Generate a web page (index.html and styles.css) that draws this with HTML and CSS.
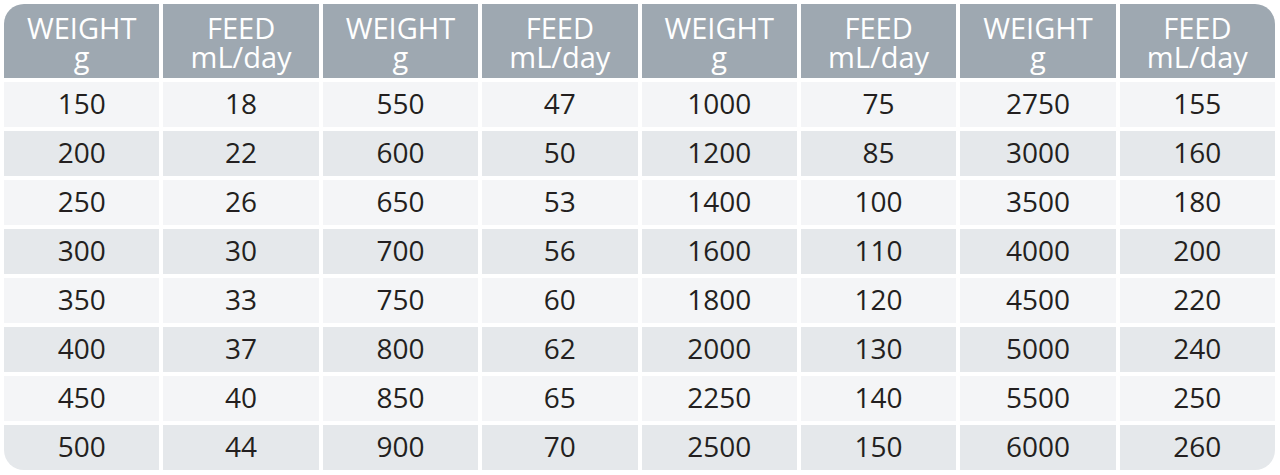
FILE: index.html
```html
<!DOCTYPE html>
<html lang="en">
<head>
<meta charset="utf-8">
<title>Feeding table</title>
<link rel="stylesheet" href="styles.css">
</head>
<body>
<div class="table">
  <div class="th"><span>WEIGHT</span><span>g</span></div><div class="th"><span>FEED</span><span>mL/day</span></div>
  <div class="th"><span>WEIGHT</span><span>g</span></div><div class="th"><span>FEED</span><span>mL/day</span></div>
  <div class="th"><span>WEIGHT</span><span>g</span></div><div class="th"><span>FEED</span><span>mL/day</span></div>
  <div class="th"><span>WEIGHT</span><span>g</span></div><div class="th"><span>FEED</span><span>mL/day</span></div>

  <div class="td odd">150</div><div class="td odd">18</div><div class="td odd">550</div><div class="td odd">47</div><div class="td odd">1000</div><div class="td odd">75</div><div class="td odd">2750</div><div class="td odd">155</div>
  <div class="td even">200</div><div class="td even">22</div><div class="td even">600</div><div class="td even">50</div><div class="td even">1200</div><div class="td even">85</div><div class="td even">3000</div><div class="td even">160</div>
  <div class="td odd">250</div><div class="td odd">26</div><div class="td odd">650</div><div class="td odd">53</div><div class="td odd">1400</div><div class="td odd">100</div><div class="td odd">3500</div><div class="td odd">180</div>
  <div class="td even">300</div><div class="td even">30</div><div class="td even">700</div><div class="td even">56</div><div class="td even">1600</div><div class="td even">110</div><div class="td even">4000</div><div class="td even">200</div>
  <div class="td odd">350</div><div class="td odd">33</div><div class="td odd">750</div><div class="td odd">60</div><div class="td odd">1800</div><div class="td odd">120</div><div class="td odd">4500</div><div class="td odd">220</div>
  <div class="td even">400</div><div class="td even">37</div><div class="td even">800</div><div class="td even">62</div><div class="td even">2000</div><div class="td even">130</div><div class="td even">5000</div><div class="td even">240</div>
  <div class="td odd">450</div><div class="td odd">40</div><div class="td odd">850</div><div class="td odd">65</div><div class="td odd">2250</div><div class="td odd">140</div><div class="td odd">5500</div><div class="td odd">250</div>
  <div class="td even">500</div><div class="td even">44</div><div class="td even">900</div><div class="td even">70</div><div class="td even">2500</div><div class="td even">150</div><div class="td even">6000</div><div class="td even">260</div>
</div>
</body>
</html>
```
FILE: styles.css
```css
html, body {
  margin: 0;
  padding: 0;
  background: #ffffff;
}
body {
  padding: 4px 5px 0 4px;
  font-family: "Open Sans", "Noto Sans", sans-serif;
}
.table {
  display: grid;
  grid-template-columns: repeat(8, 1fr);
  grid-template-rows: 74px repeat(8, 45px);
  gap: 4px;
  border-radius: 20px;
  overflow: hidden;
  background: #ffffff;
}
.th {
  background: #9ea8b1;
  color: #ffffff;
  font-size: 29px;
  line-height: 29px;
  text-align: center;
  display: flex;
  flex-direction: column;
  align-items: center;
  justify-content: center;
  padding-top: 2px;
  box-sizing: border-box;
}
.th span {
  display: block;
}
.td {
  font-size: 28px;
  color: #231f20;
  text-align: center;
  line-height: 45px;
  height: 45px;
  padding-bottom: 2px;
  box-sizing: border-box;
  display: flex;
  align-items: center;
  justify-content: center;
}
.odd { background: #f4f5f7; }
.even { background: #e5e8eb; }
```
